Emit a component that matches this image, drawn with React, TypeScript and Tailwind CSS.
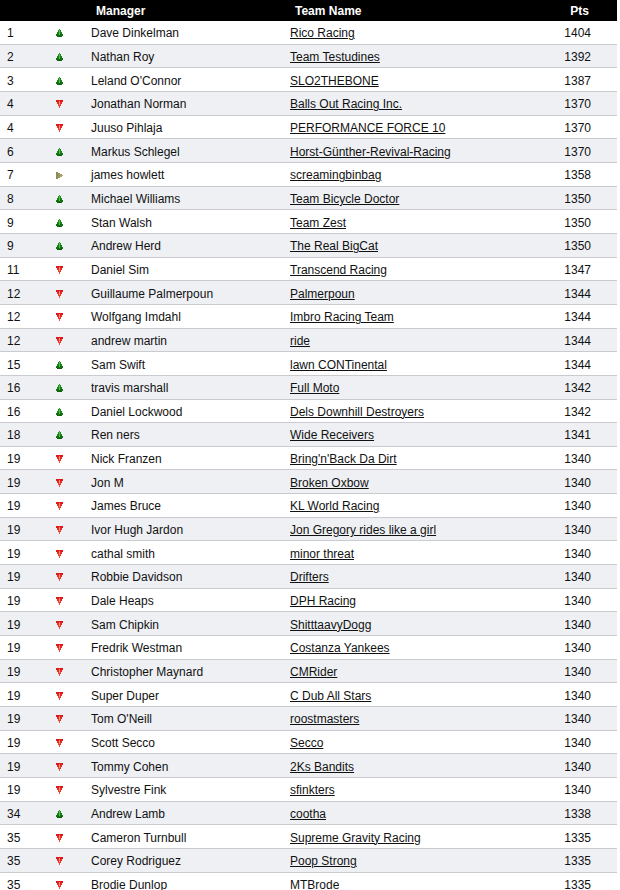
type Move = 'up' | 'down' | 'same';

interface Row {
  rank: number;
  move: Move;
  manager: string;
  team: string;
  pts: number;
}

const rows: Row[] = [
  { rank: 1, move: 'up', manager: 'Dave Dinkelman', team: 'Rico Racing', pts: 1404 },
  { rank: 2, move: 'up', manager: 'Nathan Roy', team: 'Team Testudines', pts: 1392 },
  { rank: 3, move: 'up', manager: "Leland O'Connor", team: 'SLO2THEBONE', pts: 1387 },
  { rank: 4, move: 'down', manager: 'Jonathan Norman', team: 'Balls Out Racing Inc.', pts: 1370 },
  { rank: 4, move: 'down', manager: 'Juuso Pihlaja', team: 'PERFORMANCE FORCE 10', pts: 1370 },
  { rank: 6, move: 'up', manager: 'Markus Schlegel', team: 'Horst-Günther-Revival-Racing', pts: 1370 },
  { rank: 7, move: 'same', manager: 'james howlett', team: 'screamingbinbag', pts: 1358 },
  { rank: 8, move: 'up', manager: 'Michael Williams', team: 'Team Bicycle Doctor', pts: 1350 },
  { rank: 9, move: 'up', manager: 'Stan Walsh', team: 'Team Zest', pts: 1350 },
  { rank: 9, move: 'up', manager: 'Andrew Herd', team: 'The Real BigCat', pts: 1350 },
  { rank: 11, move: 'down', manager: 'Daniel Sim', team: 'Transcend Racing', pts: 1347 },
  { rank: 12, move: 'down', manager: 'Guillaume Palmerpoun', team: 'Palmerpoun', pts: 1344 },
  { rank: 12, move: 'down', manager: 'Wolfgang Imdahl', team: 'Imbro Racing Team', pts: 1344 },
  { rank: 12, move: 'down', manager: 'andrew martin', team: 'ride', pts: 1344 },
  { rank: 15, move: 'up', manager: 'Sam Swift', team: 'lawn CONTinental', pts: 1344 },
  { rank: 16, move: 'up', manager: 'travis marshall', team: 'Full Moto', pts: 1342 },
  { rank: 16, move: 'up', manager: 'Daniel Lockwood', team: 'Dels Downhill Destroyers', pts: 1342 },
  { rank: 18, move: 'up', manager: 'Ren ners', team: 'Wide Receivers', pts: 1341 },
  { rank: 19, move: 'down', manager: 'Nick Franzen', team: "Bring'n'Back Da Dirt", pts: 1340 },
  { rank: 19, move: 'down', manager: 'Jon M', team: 'Broken Oxbow', pts: 1340 },
  { rank: 19, move: 'down', manager: 'James Bruce', team: 'KL World Racing', pts: 1340 },
  { rank: 19, move: 'down', manager: 'Ivor Hugh Jardon', team: 'Jon Gregory rides like a girl', pts: 1340 },
  { rank: 19, move: 'down', manager: 'cathal smith', team: 'minor threat', pts: 1340 },
  { rank: 19, move: 'down', manager: 'Robbie Davidson', team: 'Drifters', pts: 1340 },
  { rank: 19, move: 'down', manager: 'Dale Heaps', team: 'DPH Racing', pts: 1340 },
  { rank: 19, move: 'down', manager: 'Sam Chipkin', team: 'ShitttaavyDogg', pts: 1340 },
  { rank: 19, move: 'down', manager: 'Fredrik Westman', team: 'Costanza Yankees', pts: 1340 },
  { rank: 19, move: 'down', manager: 'Christopher Maynard', team: 'CMRider', pts: 1340 },
  { rank: 19, move: 'down', manager: 'Super Duper', team: 'C Dub All Stars', pts: 1340 },
  { rank: 19, move: 'down', manager: "Tom O'Neill", team: 'roostmasters', pts: 1340 },
  { rank: 19, move: 'down', manager: 'Scott Secco', team: 'Secco', pts: 1340 },
  { rank: 19, move: 'down', manager: 'Tommy Cohen', team: '2Ks Bandits', pts: 1340 },
  { rank: 19, move: 'down', manager: 'Sylvestre Fink', team: 'sfinkters', pts: 1340 },
  { rank: 34, move: 'up', manager: 'Andrew Lamb', team: 'cootha', pts: 1338 },
  { rank: 35, move: 'down', manager: 'Cameron Turnbull', team: 'Supreme Gravity Racing', pts: 1335 },
  { rank: 35, move: 'down', manager: 'Corey Rodriguez', team: 'Poop Strong', pts: 1335 },
  { rank: 35, move: 'down', manager: 'Brodie Dunlop', team: 'MTBrode', pts: 1335 },
];

function MoveIcon({ move }: { move: Move }) {
  if (move === 'up') {
    return (
      <svg width="7" height="8" viewBox="0 0 7 8" shapeRendering="crispEdges">
        <rect x="3" y="0" width="1" height="1" fill="#2f9a2f" />
        <rect x="2" y="1" width="3" height="2" fill="#1f8a1f" />
        <rect x="1" y="3" width="5" height="2" fill="#1a801a" />
        <rect x="0" y="5" width="7" height="2" fill="#137013" />
        <rect x="3" y="1" width="1" height="5" fill="#4fbf4f" />
        <rect x="1" y="7" width="5" height="1" fill="#0e5e0e" />
      </svg>
    );
  }
  if (move === 'down') {
    return (
      <svg width="7" height="8" viewBox="0 0 7 8" shapeRendering="crispEdges">
        <rect x="0" y="0" width="7" height="2" fill="#e0181c" />
        <rect x="1" y="2" width="5" height="2" fill="#e82a2a" />
        <rect x="2" y="4" width="3" height="2" fill="#ee3a30" />
        <rect x="3" y="6" width="1" height="2" fill="#f05030" />
        <rect x="3" y="1" width="1" height="4" fill="#f59a6a" />
      </svg>
    );
  }
  return (
    <svg width="7" height="7" viewBox="0 0 7 7" shapeRendering="crispEdges">
      <rect x="0" y="0" width="2" height="7" fill="#8c8a55" />
      <rect x="2" y="1" width="2" height="5" fill="#99975f" />
      <rect x="4" y="2" width="2" height="3" fill="#a5a36a" />
      <rect x="6" y="3" width="1" height="1" fill="#b0ae75" />
    </svg>
  );
}

export default function App() {
  return (
    <div className="w-[620px] bg-white font-['Liberation_Sans',Arial,sans-serif] text-[12px] text-[#111]">
      <div className="w-[617px]">
        {/* Header */}
        <div className="grid h-[21px] grid-cols-[70px_215px_252px_80px] items-center bg-black font-bold text-white">
          <div />
          <div className="pl-[26px]">Manager</div>
          <div className="pl-[10px]">Team Name</div>
          <div className="pr-[28px] text-right">Pts</div>
        </div>

        {/* Rows */}
        {rows.map((r, i) => (
          <div
            key={i}
            className={`grid h-[23.667px] grid-cols-[48px_22px_215px_252px_80px] items-center border-b border-[#c9cbcf] pt-[2px] ${
              i % 2 === 1 ? 'bg-[#eef0f4]' : 'bg-white'
            }`}
          >
            <div className="pl-[7px]">{r.rank}</div>
            <div className="flex justify-center">
              <MoveIcon move={r.move} />
            </div>
            <div className="pl-[21px] whitespace-nowrap">{r.manager}</div>
            <div className="pl-[5px] whitespace-nowrap">
              <a href="#" className="text-[#111] underline">
                {r.team}
              </a>
            </div>
            <div className="pr-[26px] text-right">{r.pts}</div>
          </div>
        ))}
      </div>
    </div>
  );
}
